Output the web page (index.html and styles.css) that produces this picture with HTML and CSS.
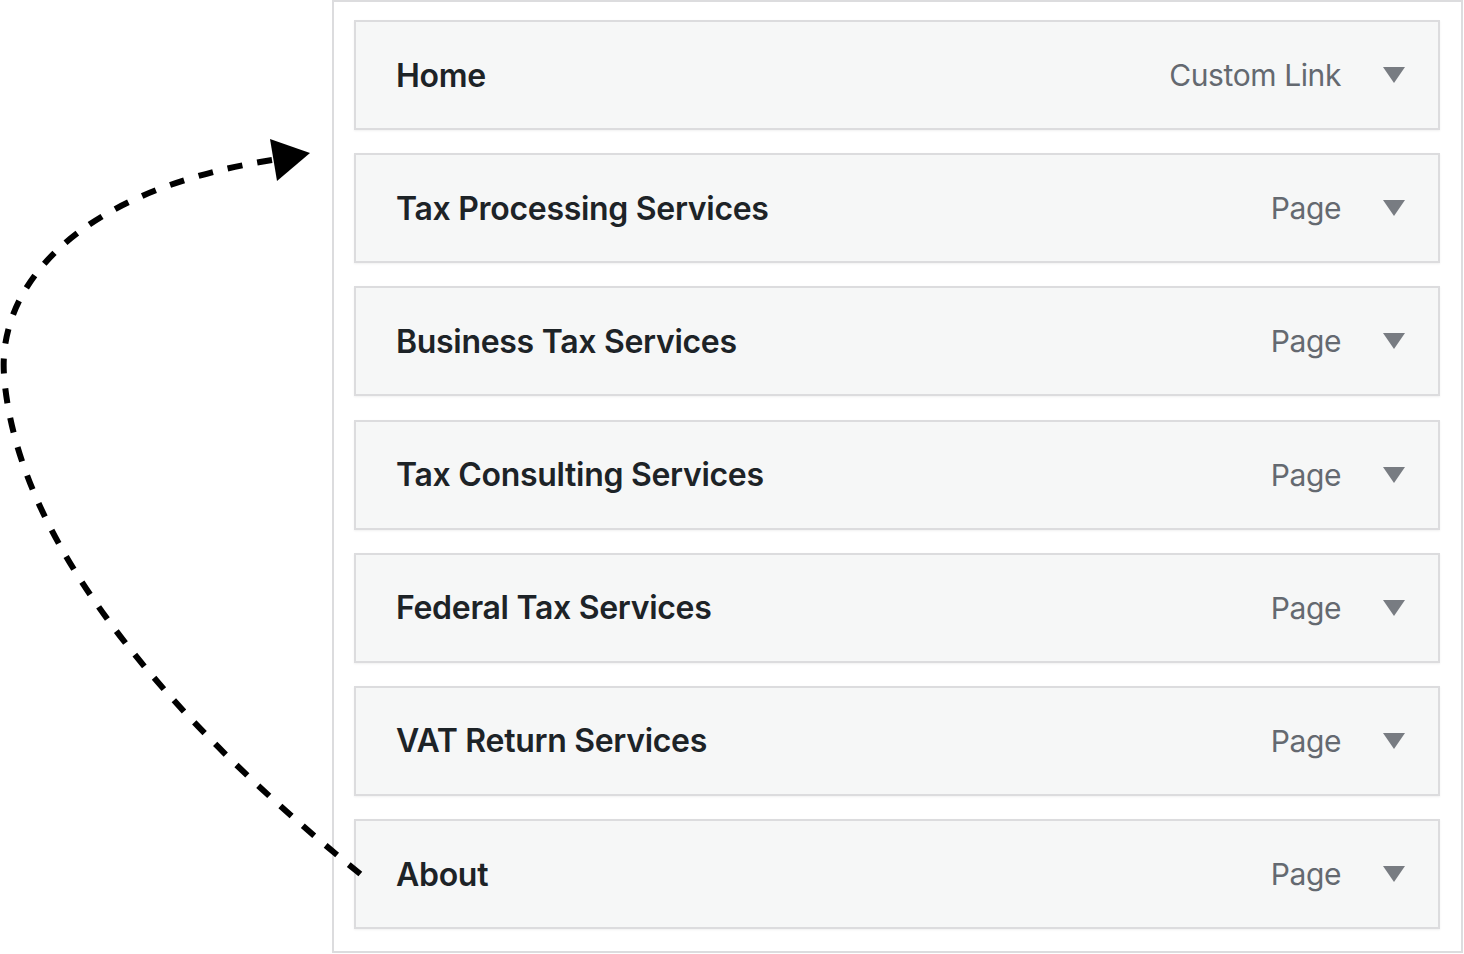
FILE: index.html
```html
<!DOCTYPE html>
<html lang="en">
<head>
    <meta charset="UTF-8">
    <meta name="viewport" content="width=device-width, initial-scale=1.0">
    <title>Menu Structure</title>
    <link rel="stylesheet" href="styles.css">
</head>
<body>
    <div class="stage">
        <!-- dashed arrow: drag "About" up to the top -->
        <svg class="move-arrow" width="1464" height="954" viewBox="0 0 1464 954">
            <path d="M272 160 C 70 192 -2 290 4 375 C 18 560 200 745 364 877" fill="none" stroke="#000" stroke-width="6" stroke-dasharray="15 15"/>
            <polygon points="270,139 277,181 310,153" fill="#000"/>
        </svg>

        <div class="menu-panel">
            <ul class="menu-list">
                <li class="menu-item">
                    <span class="item-title">Home</span>
                    <span class="item-controls">
                        <span class="item-type">Custom Link</span>
                        <span class="item-toggle"></span>
                    </span>
                </li>
                <li class="menu-item">
                    <span class="item-title">Tax Processing Services</span>
                    <span class="item-controls">
                        <span class="item-type">Page</span>
                        <span class="item-toggle"></span>
                    </span>
                </li>
                <li class="menu-item">
                    <span class="item-title">Business Tax Services</span>
                    <span class="item-controls">
                        <span class="item-type">Page</span>
                        <span class="item-toggle"></span>
                    </span>
                </li>
                <li class="menu-item">
                    <span class="item-title">Tax Consulting Services</span>
                    <span class="item-controls">
                        <span class="item-type">Page</span>
                        <span class="item-toggle"></span>
                    </span>
                </li>
                <li class="menu-item">
                    <span class="item-title">Federal Tax Services</span>
                    <span class="item-controls">
                        <span class="item-type">Page</span>
                        <span class="item-toggle"></span>
                    </span>
                </li>
                <li class="menu-item">
                    <span class="item-title">VAT Return Services</span>
                    <span class="item-controls">
                        <span class="item-type">Page</span>
                        <span class="item-toggle"></span>
                    </span>
                </li>
                <li class="menu-item">
                    <span class="item-title">About</span>
                    <span class="item-controls">
                        <span class="item-type">Page</span>
                        <span class="item-toggle"></span>
                    </span>
                </li>
            </ul>
        </div>
    </div>
</body>
</html>
```

FILE: styles.css
```css
body {
    margin: 0;
    background-color: #fff;
    font-family: Inter, "Noto Sans", "Liberation Sans", sans-serif;
}
.stage {
    position: relative;
    width: 1464px;
    height: 954px;
}
.move-arrow {
    position: absolute;
    top: 0;
    left: 0;
    pointer-events: none;
    z-index: 2;
}
.menu-panel {
    box-sizing: border-box;
    margin-left: 332px;
    width: 1131px;
    height: 953px;
    border: 2px solid #dcdcde;
    padding: 18px 21px 0 20px;
}
.menu-list {
    list-style: none;
    margin: 0;
    padding: 0;
    display: flex;
    flex-direction: column;
    gap: 23.2px;
}
.menu-item {
    box-sizing: border-box;
    height: 110px;
    display: flex;
    align-items: center;
    justify-content: space-between;
    padding: 0 33px 0 40px;
    background-color: #f6f7f7;
    border: 2px solid #dcdcde;
    box-shadow: 0 1px 2px rgba(0, 0, 0, 0.06);
}
.item-title {
    font-size: 32px;
    font-weight: 600;
    color: #1d2327;
    letter-spacing: -0.3px;
}
.item-controls {
    display: flex;
    align-items: center;
    gap: 42px;
}
.item-type {
    font-size: 30px;
    color: #646970;
    letter-spacing: -0.4px;
}
.item-toggle {
    width: 0;
    height: 0;
    border-left: 11px solid transparent;
    border-right: 11px solid transparent;
    border-top: 16px solid #787c82;
}
```
